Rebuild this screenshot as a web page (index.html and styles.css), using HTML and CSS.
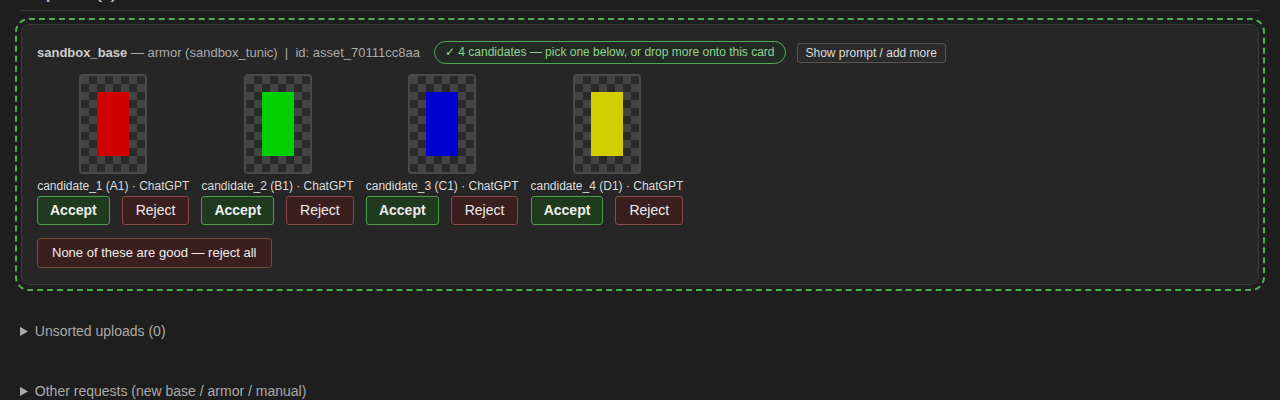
FILE: index.html
```html
<!DOCTYPE html>
<html>
<head>
<meta charset="utf-8">
<link rel="stylesheet" href="styles.css">
</head>
<body>
<div class="page">
  <h3 class="section-title">Requests (1)</h3>
  <div class="card">
    <div class="card-head">
      <span class="meta"><b>sandbox_base</b> — armor (sandbox_tunic) &nbsp;|&nbsp; id: asset_70111cc8aa</span>
      <span class="badge">✓ 4 candidates — pick one below, or drop more onto this card</span>
      <button class="small-btn">Show prompt / add more</button>
    </div>
    <div class="candidates">
      <div class="cand">
        <div class="thumb"><div class="swatch red"></div></div>
        <div class="caption">candidate_1 (A1) · ChatGPT</div>
        <div class="actions"><button class="btn accept">Accept</button><button class="btn reject">Reject</button></div>
      </div>
      <div class="cand">
        <div class="thumb"><div class="swatch green"></div></div>
        <div class="caption">candidate_2 (B1) · ChatGPT</div>
        <div class="actions"><button class="btn accept">Accept</button><button class="btn reject">Reject</button></div>
      </div>
      <div class="cand">
        <div class="thumb"><div class="swatch blue"></div></div>
        <div class="caption">candidate_3 (C1) · ChatGPT</div>
        <div class="actions"><button class="btn accept">Accept</button><button class="btn reject">Reject</button></div>
      </div>
      <div class="cand">
        <div class="thumb"><div class="swatch yellow"></div></div>
        <div class="caption">candidate_4 (D1) · ChatGPT</div>
        <div class="actions"><button class="btn accept">Accept</button><button class="btn reject">Reject</button></div>
      </div>
    </div>
    <button class="btn reject-all">None of these are good — reject all</button>
  </div>
  <details class="fold"><summary>Unsorted uploads (0)</summary></details>
  <details class="fold"><summary>Other requests (new base / armor / manual)</summary></details>
</div>
</body>
</html>
```

FILE: styles.css
```css
html, body {
  margin: 0;
  background: #1e1e1e;
  color: #ccc;
  font-family: "Liberation Sans", Arial, sans-serif;
}
.page {
  padding: 0 20px;
  overflow: hidden;
}
.section-title {
  margin: -16px 0 0 0;
  padding: 0 0 6px 0;
  font-size: 16px;
  line-height: 20px;
  color: #bbb;
  border-bottom: 1px solid #363636;
}
.card {
  margin: 13px 1px 0 1px;
  background: #262626;
  border: 1px solid #3a3a3a;
  border-radius: 8px;
  outline: 2px dashed #4caf50;
  outline-offset: 4px;
  padding: 16px 15px 16px 15px;
}
.card-head {
  display: flex;
  align-items: center;
  font-size: 13px;
  color: #aaa;
  height: 23px;
}
.card-head b {
  color: #ccc;
}
.badge {
  margin-left: 14px;
  border: 1px solid #4caf50;
  border-radius: 12px;
  padding: 3px 10px;
  font-size: 12px;
  line-height: 15px;
  color: #8fd48f;
  background: #232a23;
}
.small-btn {
  margin-left: 11px;
  font-family: inherit;
  font-size: 12px;
  line-height: 15px;
  padding: 2px 8px 1px 8px;
  color: #ddd;
  background: #2b2b2b;
  border: 1px solid #555;
  border-radius: 3px;
}
.candidates {
  display: flex;
  gap: 12px;
  margin-top: 10px;
}
.cand {
  display: flex;
  flex-direction: column;
  align-items: center;
}
.thumb {
  width: 64px;
  height: 96px;
  border: 2px solid #4a4a4a;
  border-radius: 4px;
  background-color: #2a2a2a;
  background-image: conic-gradient(#444 25%, transparent 0 50%, #444 0 75%, transparent 0);
  background-size: 16px 16px;
  background-position: 8px 0;
  display: flex;
  align-items: center;
  justify-content: center;
}
.swatch {
  width: 32px;
  height: 64px;
}
.red { background: #d00000; }
.green { background: #00d000; }
.blue { background: #0000d0; }
.yellow { background: #d0d000; }
.caption {
  margin-top: 5px;
  font-size: 12px;
  line-height: 15px;
  color: #ddd;
}
.actions {
  display: flex;
  gap: 12px;
  margin-top: 2px;
}
.btn {
  font-family: inherit;
  font-size: 14px;
  line-height: 17px;
  padding: 5px 13px;
  border-radius: 3px;
  color: #eee;
}
.accept {
  font-weight: bold;
  background: #1f3a1f;
  border: 1px solid #4a9e4a;
  padding: 5px 12px;
}
.reject {
  background: #3b1e1e;
  border: 1px solid #8c4848;
}
.reject-all {
  display: block;
  margin-top: 13px;
  padding: 6px 14px;
  line-height: 16px;
  background: #3b1e1e;
  border: 1px solid #6e5036;
  font-size: 13px;
}
.fold {
  margin-top: 36px;
  font-size: 14px;
  line-height: 20px;
  color: #aaa;
}
.fold + .fold {
  margin-top: 40px;
}
.fold summary {
  cursor: pointer;
}
```
